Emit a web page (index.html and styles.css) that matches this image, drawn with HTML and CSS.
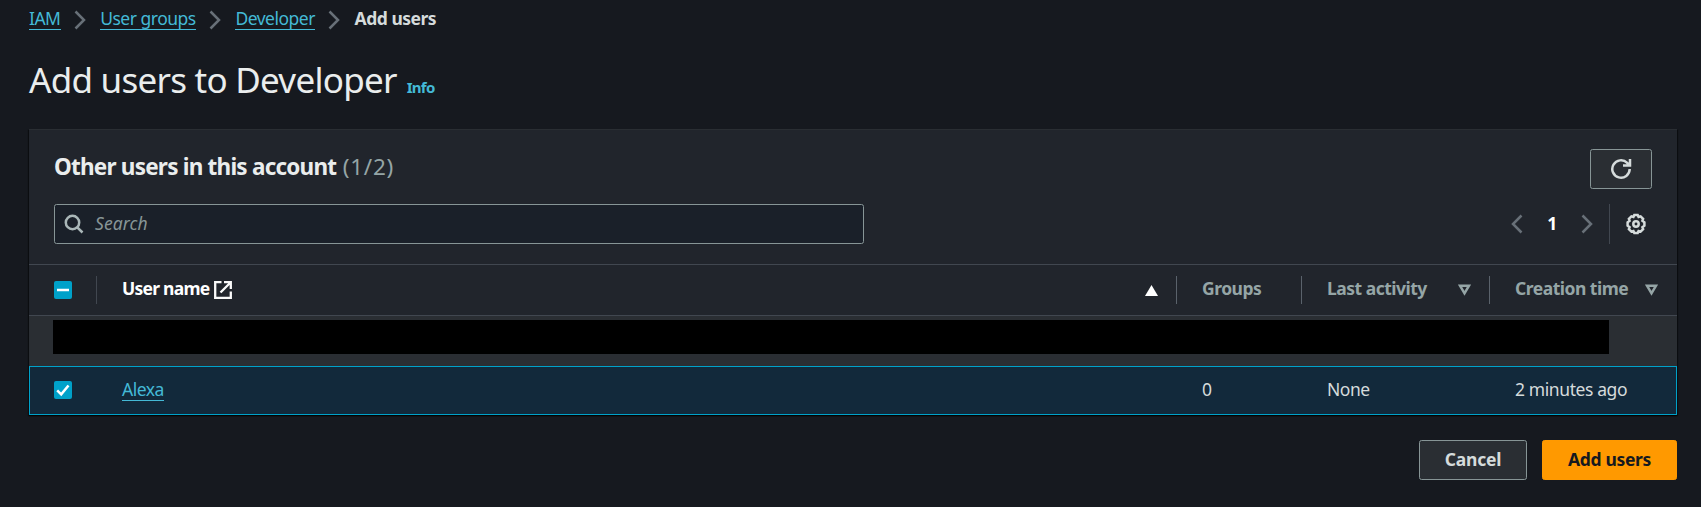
FILE: index.html
```
<!DOCTYPE html>
<html lang="en">
<head>
<meta charset="utf-8">
<title>Add users to Developer</title>
<link rel="stylesheet" href="styles.css">
</head>
<body>
<nav class="crumbs">
  <a class="link" href="#">IAM</a>
  <svg class="chev" viewBox="0 0 12 20"><path d="M1.5 1.5 10 10 1.5 18.500"/></svg>
  <a class="link" href="#">User groups</a>
  <svg class="chev" viewBox="0 0 12 20"><path d="M1.5 1.5 10 10 1.5 18.500"/></svg>
  <a class="link" href="#">Developer</a>
  <svg class="chev" viewBox="0 0 12 20"><path d="M1.5 1.5 10 10 1.5 18.500"/></svg>
  <span class="here">Add users</span>
</nav>
<header class="title"><h1>Add users to Developer</h1><a class="info" href="#">Info</a></header>
<main class="panel">
  <div class="top">
    <h2>Other users in this account <span class="count">(1/2)</span></h2>
    <button class="btn refresh" aria-label="Refresh"><svg width="22" height="22" viewBox="0 0 22 22"><path d="M19.700 11A8.700 8.700 0 1 1 17.200 4.900L19 7M20 1v6.500h-7"/></svg></button>
  </div>
  <div class="tools">
    <label class="search">
      <svg width="20" height="20" viewBox="0 0 20 20"><circle cx="8.500" cy="8.500" r="6.700"/><path d="m13.300 13.300 5.200 5.200"/></svg>
      <span>Search</span>
    </label>
    <div class="pager">
      <svg class="chev" viewBox="0 0 12 20"><path d="M10.500 1.500 2 10l8.500 8.500"/></svg>
      <b>1</b>
      <svg class="chev" viewBox="0 0 12 20"><path d="M1.500 1.500 10 10 1.500 18.500"/></svg>
      <div class="gear"><svg width="22" height="22" viewBox="0 0 22 22"><path d="M9.300 2.100h3.400l.9 1.900 2-.6 2.500 2.400-.7 2 2 1.500v3.400l-2 1.500.7 2-2.500 2.400-2-.6-.9 1.900H9.300L8.400 18l-2 .6-2.500-2.400.7-2-2-1.500V9.300l2-1.500-.7-2 2.500-2.400 2 .6z"/><circle cx="11" cy="11" r="2.700"/></svg></div>
    </div>
  </div>
  <div class="row head">
    <div class="check"><i class="box"><svg viewBox="0 0 18 18"><path d="M3 9h12"/></svg></i></div>
    <div class="cell name"><span class="uname">User name</span>
      <svg class="ext" width="18" height="18" viewBox="0 0 18 18"><path d="M7.500 1.200H1.200v15.600h15.600v-6.300M10 1.200h6.800V8M16.500 1.500 6.500 11.500"/></svg>
      <svg class="sort up" width="13" height="11" viewBox="0 0 13 11"><path d="M6.500 0 13 11H0z"/></svg>
    </div>
    <div class="cell groups"><span>Groups</span></div>
    <div class="cell activity"><span>Last activity</span><svg class="sort" width="13" height="12" viewBox="0 0 13 12"><path d="M2 1.700h9L6.500 9.300z"/></svg></div>
    <div class="cell created"><span>Creation time</span><svg class="sort" width="13" height="12" viewBox="0 0 13 12"><path d="M2 1.700h9L6.500 9.300z"/></svg></div>
  </div>
  <div class="hidden-row"><div class="redacted"></div></div>
  <div class="row picked">
    <div class="check"><i class="box"><svg viewBox="0 0 18 18"><path d="m3.200 9.300 4 4L14.500 4.500"/></svg></i></div>
    <div class="cell name"><a class="link" href="#">Alexa</a></div>
    <div class="cell groups"><span>0</span></div>
    <div class="cell activity"><span>None</span></div>
    <div class="cell created"><span class="ago">2 minutes ago</span></div>
  </div>
</main>
<footer class="actions">
  <button class="btn cancel">Cancel</button>
  <button class="btn primary">Add users</button>
</footer>
</body>
</html>
```
FILE: styles.css
```
* { box-sizing: border-box; }
body {
  margin: 0;
  height: 507px;
  overflow: hidden;
  padding: 0 24px 0 29px;
  background: #16191f;
  color: #d5dbdb;
  font: 17.5px/24px "Noto Sans", "Open Sans", sans-serif;
  letter-spacing: -.5px;
}
svg { display: block; fill: none; flex: none; }
h1, h2 { margin: 0; }
.link { color: #44b9d6; text-decoration: none; border-bottom: 1px solid #44b9d6; line-height: 22px; white-space: nowrap; }
.crumbs { display: flex; height: 40px; padding-top: 7px; align-items: flex-start; letter-spacing: -.5px; }
.chev { width: 12px; height: 20px; stroke: #687078; stroke-width: 2.500; }
.crumbs .chev { margin: 3px 14.200px 0 13.500px; }
.here { font-weight: 700; line-height: 23px; }
.title { display: flex; align-items: baseline; height: 89px; padding-top: 15px; }
.title h1 { font-size: 35px; line-height: 50px; font-weight: 400; color: #eaeded; letter-spacing: -.74px; }
.info { margin-left: 10px; font-size: 15px; font-weight: 700; color: #44b9d6; text-decoration: none; letter-spacing: -.7px; }
.panel { width: 1648px; height: 286px; background: #21252c; border-top: 1px solid #2a2e33; box-shadow: 0 1px 1px #0008, 1px 1px 1px #0006, -1px 1px 1px #0006; }
.top { display: flex; justify-content: space-between; height: 74px; padding: 19px 25px 0; }
.top h2 { font-size: 22.500px; line-height: 36px; font-weight: 700; color: #eaeded; letter-spacing: -.78px; }
.count { font-weight: 400; color: #95a5a6; letter-spacing: .7px; margin-left: 1.500px; }
.btn { height: 40px; border: 1px solid #879596; border-radius: 2.500px; background: #2a2e33; color: #d5dbdb; font: 700 17.500px/22px "Noto Sans", sans-serif; padding: 0 0 2px; letter-spacing: -.2px; }
.refresh { width: 62px; padding: 0; display: flex; align-items: center; justify-content: center; stroke: #d5dbdb; stroke-width: 2.500; }
.tools { display: flex; justify-content: space-between; height: 60px; padding: 0 25px; }
.search { width: 810px; height: 40px; display: flex; align-items: center; border: 1px solid #879596; border-radius: 2.500px; background: #1a2029; padding-left: 9px; color: #879596; font-style: italic; letter-spacing: .1px; }
.search span { padding-bottom: 2px; }
.search svg { margin-right: 11px; stroke: #aab7b8; stroke-width: 2.500; }
.pager { display: flex; align-items: center; height: 40px; }
.pager b { width: 58px; text-align: center; color: #fff; padding-bottom: 3px; }
.gear { width: 43px; height: 40px; border-left: 1px solid #414750; margin-left: 16px; display: flex; align-items: center; padding-left: 15px; stroke: #d5dbdb; stroke-width: 2.500; }
.row { display: grid; grid-template-columns: 67px 1080px 125px 188px 1fr; align-items: center; }
.head { height: 52px; border-top: 1px solid #414750; border-bottom: 1px solid #414750; color: #95a5a6; font-weight: 700; }
.check { display: flex; align-items: center; height: 28px; padding-left: 25px; }
.box { width: 18px; height: 18px; border-radius: 2px; background: #00a1c9; }
.box svg { stroke: #fff; stroke-width: 2.500; }
.cell { display: flex; align-items: center; height: 28px; padding-left: 26px; white-space: nowrap; }
.cell a { margin-bottom: 2px; }
.cell span { margin-bottom: 4px; }
.head .cell { border-left: 1px solid #5a626b; padding-left: 25px; }
.head .name { border-color: #414750; color: #fff; }
.head .uname { letter-spacing: -.75px; margin-bottom: 5px; }
.ext { margin-left: 5px; stroke: #fafafa; stroke-width: 2.300; }
.sort { margin-left: auto; stroke: #95a5a6; stroke-width: 2.500; }
.sort.up { fill: #fff; stroke: none; margin-right: 18px; }
.activity .sort { margin-right: 18px; }
.created .sort { margin-right: 19px; }
.hidden-row { height: 50px; background: #2a2e33; padding: 4px 0 0 24px; }
.redacted { width: 1556px; height: 34px; background: #000; }
.picked { height: 49px; background: #12293b; border: 1px solid #00a1c9; }
.picked .check, .picked .cell { margin-left: -1px; }
.picked .check { padding-bottom: 1px; }
.ago { letter-spacing: -.4px; }
.actions { display: flex; justify-content: flex-end; gap: 15px; padding-top: 25px; }
.cancel { width: 108px; }
.primary { width: 135px; background: #ff9900; border-color: #ff9900; color: #16191f; letter-spacing: -.35px; }
```
